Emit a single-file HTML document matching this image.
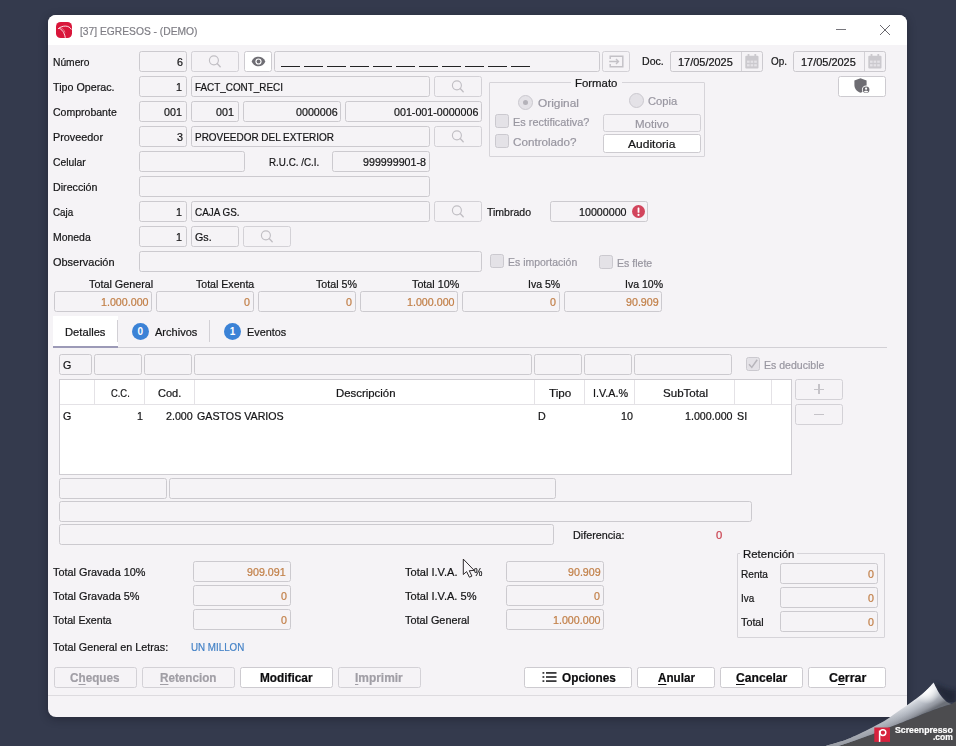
<!DOCTYPE html>
<html><head><meta charset="utf-8"><title>[37] EGRESOS - (DEMO)</title><style>
html,body{margin:0;padding:0}
body{width:956px;height:746px;overflow:hidden;background:#343a4d;position:relative;font-family:"Liberation Sans",sans-serif;}
.a,.t,.f,.b,.cb,.gb,.grid,.rd,.bd{position:absolute;box-sizing:border-box}
.t{white-space:nowrap;transform-origin:0 50%;-webkit-text-stroke:0.22px currentColor}
.win{position:absolute;left:48px;top:15px;width:859px;height:702px;background:#f5f3f6;border-radius:8px;overflow:hidden;box-shadow:0 2px 9px rgba(18,20,32,.42)}
.tb{position:absolute;left:0;top:0;width:100%;height:30px;background:#fff}
.f{border:1px solid #cccacf;border-radius:2.5px;background:#f5f3f6}
.b{border:1px solid #d3d1d6;border-radius:2.5px;background:#f5f3f6}
.w{background:#fff;border-color:#cdcbd0}
.cb{border:1px solid #cbc9cf;border-radius:2.5px;background:#e4e2e7}
.gb{border:1px solid #d6d4d9;border-radius:1px}
.grid{border:1px solid #cfcdd2;background:#fff}
.rd{width:15px;height:15px;border-radius:50%;border:1px solid #cbc9cf;background:#e4e2e7}
.rd i{position:absolute;left:4px;top:4px;width:5px;height:5px;border-radius:50%;background:#b4b2b9}
.bd{width:17.5px;height:17.5px;border-radius:50%;background:#3b82d6;color:#fff;font-size:10px;font-weight:bold;text-align:center;line-height:17.5px}
u{text-decoration:underline;text-underline-offset:1.5px}
</style></head>
<body>
<div class="win"><div class="tb"></div></div>
<svg class="a" style="left:56px;top:22px" width="16" height="16" viewBox="0 0 16 16"><rect width="16" height="16" rx="4.6" fill="#d9163a"/><path d="M2 6.9 C4.4 4.7 7 4.1 9.4 4.1 C12 4.1 14.2 5.3 15.4 7.5" fill="none" stroke="#fff" stroke-width="0.9" stroke-opacity="0.95"/><path d="M3.1 6.1 C5.6 7.4 8.4 10 9.3 15.8" fill="none" stroke="#fff" stroke-width="0.9" stroke-opacity="0.95"/><path d="M4.4 5.4 C6.6 6.4 8.2 8 9 10.6" fill="none" stroke="#fbd0d8" stroke-width="0.6" stroke-opacity="0.8"/></svg>
<div class="t" style="left:80.10px;top:22.60px;height:16px;line-height:16px;font-size:11.7px;color:#7f7e85;transform:scaleX(0.8781);">[37] EGRESOS - (DEMO)</div>
<div class="a" style="left:836px;top:29px;width:10px;height:1px;background:#77767c"></div>
<svg class="a" style="left:879px;top:24px" width="12" height="12" viewBox="0 0 12 12"><path d="M1 1 L11 11 M11 1 L1 11" stroke="#6a696f" stroke-width="1" fill="none"/></svg>
<div class="t" style="left:53.00px;top:54.00px;height:16px;line-height:16px;font-size:11.5px;color:#151517;transform:scaleX(0.8923);">Número</div>
<div class="t" style="left:53.00px;top:79.00px;height:16px;line-height:16px;font-size:11.5px;color:#151517;transform:scaleX(0.9312);">Tipo Operac.</div>
<div class="t" style="left:53.00px;top:104.00px;height:16px;line-height:16px;font-size:11.5px;color:#151517;transform:scaleX(0.9149);">Comprobante</div>
<div class="t" style="left:53.00px;top:129.00px;height:16px;line-height:16px;font-size:11.5px;color:#151517;transform:scaleX(0.9423);">Proveedor</div>
<div class="t" style="left:53.00px;top:154.00px;height:16px;line-height:16px;font-size:11.5px;color:#151517;transform:scaleX(0.8989);">Celular</div>
<div class="t" style="left:53.00px;top:179.00px;height:16px;line-height:16px;font-size:11.5px;color:#151517;transform:scaleX(0.9284);">Dirección</div>
<div class="t" style="left:53.00px;top:204.00px;height:16px;line-height:16px;font-size:11.5px;color:#151517;transform:scaleX(0.8556);">Caja</div>
<div class="t" style="left:53.00px;top:229.00px;height:16px;line-height:16px;font-size:11.5px;color:#151517;transform:scaleX(0.9081);">Moneda</div>
<div class="t" style="left:53.00px;top:254.00px;height:16px;line-height:16px;font-size:11.5px;color:#151517;transform:scaleX(0.9526);">Observación</div>
<div class="f" style="left:139px;top:51px;width:48px;height:21px;"></div>
<div class="t" style="left:177.25px;top:54.00px;height:16px;line-height:16px;font-size:10.8px;color:#151517;transform:scaleX(0.9900);">6</div>
<div class="b" style="left:191px;top:51px;width:48px;height:21px;"></div>
<svg class="a" style="left:205px;top:51.5px" width="20" height="20" viewBox="0 0 20 20"><circle cx="8.9" cy="8.3" r="4.5" fill="none" stroke="#c1bfc4" stroke-width="1.15"/><path d="M12.2 11.6 L15.2 14.7" stroke="#c1bfc4" stroke-width="1.4" stroke-linecap="round"/></svg>
<div class="b w" style="left:244px;top:51px;width:28px;height:21px;"></div>
<svg class="a" style="left:251px;top:56px" width="15" height="11" viewBox="0 0 15 11"><path d="M0.6 5.5 C2.2 2 4.8 0.7 7.5 0.7 C10.2 0.7 12.8 2 14.4 5.5 C12.8 9 10.2 10.3 7.5 10.3 C4.8 10.3 2.2 9 0.6 5.5 Z" fill="#6f6e74"/><circle cx="7.5" cy="5.5" r="3.1" fill="#fff"/><circle cx="7.5" cy="5.5" r="1.9" fill="#6f6e74"/></svg>
<div class="f" style="left:274px;top:51px;width:326px;height:21px;"></div>
<div class="a" style="left:281.25px;top:66.1px;width:18.8px;height:1.3px;background:#232325"></div>
<div class="a" style="left:304.25px;top:66.1px;width:18.8px;height:1.3px;background:#232325"></div>
<div class="a" style="left:327.25px;top:66.1px;width:18.8px;height:1.3px;background:#232325"></div>
<div class="a" style="left:350.25px;top:66.1px;width:18.8px;height:1.3px;background:#232325"></div>
<div class="a" style="left:373.25px;top:66.1px;width:18.8px;height:1.3px;background:#232325"></div>
<div class="a" style="left:396.25px;top:66.1px;width:18.8px;height:1.3px;background:#232325"></div>
<div class="a" style="left:419.25px;top:66.1px;width:18.8px;height:1.3px;background:#232325"></div>
<div class="a" style="left:442.25px;top:66.1px;width:18.8px;height:1.3px;background:#232325"></div>
<div class="a" style="left:465.25px;top:66.1px;width:18.8px;height:1.3px;background:#232325"></div>
<div class="a" style="left:488.25px;top:66.1px;width:18.8px;height:1.3px;background:#232325"></div>
<div class="a" style="left:511.25px;top:66.1px;width:18.8px;height:1.3px;background:#232325"></div>
<div class="b" style="left:602px;top:51px;width:28px;height:21px;"></div>
<svg class="a" style="left:608px;top:55px" width="16" height="13" viewBox="0 0 16 13"><path d="M2.2 4 V1.2 H14.8 V11.8 H2.2 V9" fill="none" stroke="#c3c1c6" stroke-width="1.45"/><path d="M1.2 6.5 H10.5 M8 4 L10.5 6.5 L8 9" fill="none" stroke="#c3c1c6" stroke-width="1.35"/></svg>
<div class="t" style="left:642.00px;top:52.70px;height:16px;line-height:16px;font-size:11.5px;color:#151517;transform:scaleX(0.9199);">Doc.</div>
<div class="f" style="left:670px;top:51px;width:93px;height:21px;"></div>
<div class="a" style="left:741px;top:52px;width:1px;height:19px;background:#d3d1d6"></div>
<div class="t" style="left:677.60px;top:54.00px;height:16px;line-height:16px;font-size:10.8px;color:#151517;transform:scaleX(1.0138);">17/05/2025</div>
<svg class="a" style="left:745px;top:54px" width="14" height="15" viewBox="0 0 14 15"><rect x="0.3" y="1.8" width="13.2" height="12.8" rx="1" fill="#cbc9ce"/><rect x="2.6" y="0" width="1.8" height="3" fill="#cbc9ce"/><rect x="9.4" y="0" width="1.8" height="3" fill="#cbc9ce"/><g fill="#e4e2e6"><rect x="2" y="6.6" width="2.6" height="2.2"/><rect x="5.6" y="6.6" width="2.6" height="2.2"/><rect x="9.2" y="6.6" width="2.6" height="2.2"/><rect x="2" y="10.2" width="2.6" height="2.2"/><rect x="5.6" y="10.2" width="2.6" height="2.2"/><rect x="9.2" y="10.2" width="2.6" height="2.2"/></g></svg>
<div class="t" style="left:771.25px;top:52.70px;height:16px;line-height:16px;font-size:11.5px;color:#151517;transform:scaleX(0.8631);">Op.</div>
<div class="f" style="left:793px;top:51px;width:93px;height:21px;"></div>
<div class="a" style="left:864px;top:52px;width:1px;height:19px;background:#d3d1d6"></div>
<div class="t" style="left:800.70px;top:54.00px;height:16px;line-height:16px;font-size:10.8px;color:#151517;transform:scaleX(1.0138);">17/05/2025</div>
<svg class="a" style="left:868px;top:54px" width="14" height="15" viewBox="0 0 14 15"><rect x="0.3" y="1.8" width="13.2" height="12.8" rx="1" fill="#cbc9ce"/><rect x="2.6" y="0" width="1.8" height="3" fill="#cbc9ce"/><rect x="9.4" y="0" width="1.8" height="3" fill="#cbc9ce"/><g fill="#e4e2e6"><rect x="2" y="6.6" width="2.6" height="2.2"/><rect x="5.6" y="6.6" width="2.6" height="2.2"/><rect x="9.2" y="6.6" width="2.6" height="2.2"/><rect x="2" y="10.2" width="2.6" height="2.2"/><rect x="5.6" y="10.2" width="2.6" height="2.2"/><rect x="9.2" y="10.2" width="2.6" height="2.2"/></g></svg>
<div class="f" style="left:139px;top:76px;width:48px;height:21px;"></div>
<div class="t" style="left:175.85px;top:79.00px;height:16px;line-height:16px;font-size:10.8px;color:#151517;transform:scaleX(0.9900);">1</div>
<div class="f" style="left:191px;top:76px;width:239px;height:21px;"></div>
<div class="t" style="left:194.50px;top:79.00px;height:16px;line-height:16px;font-size:10.8px;color:#151517;transform:scaleX(0.9155);">FACT_CONT_RECI</div>
<div class="b" style="left:434px;top:76px;width:48px;height:21px;"></div>
<svg class="a" style="left:448px;top:76.5px" width="20" height="20" viewBox="0 0 20 20"><circle cx="8.9" cy="8.3" r="4.5" fill="none" stroke="#c1bfc4" stroke-width="1.15"/><path d="M12.2 11.6 L15.2 14.7" stroke="#c1bfc4" stroke-width="1.4" stroke-linecap="round"/></svg>
<div class="b w" style="left:838px;top:76px;width:48px;height:21px;"></div>
<svg class="a" style="left:854px;top:78px" width="17" height="16" viewBox="0 0 17 16"><path d="M6.5 0.3 L12.6 2.6 V7 C12.6 10.6 10.2 13.6 6.5 14.8 C2.8 13.6 0.4 10.6 0.4 7 V2.6 Z" fill="#6d6c72"/><circle cx="12.1" cy="11.8" r="4.2" fill="#fff"/><circle cx="12.1" cy="11.8" r="3.3" fill="#6d6c72"/><circle cx="12.1" cy="10.7" r="1.1" fill="#fff"/><path d="M9.9 13.6 C10.5 12.4 13.7 12.4 14.3 13.6 C13.4 14.8 10.8 14.8 9.9 13.6Z" fill="#fff"/></svg>
<div class="f" style="left:139px;top:101px;width:48px;height:21px;"></div>
<div class="t" style="left:163.96px;top:104.00px;height:16px;line-height:16px;font-size:10.8px;color:#151517;transform:scaleX(0.9900);">001</div>
<div class="f" style="left:191px;top:101px;width:48px;height:21px;"></div>
<div class="t" style="left:215.96px;top:104.00px;height:16px;line-height:16px;font-size:10.8px;color:#151517;transform:scaleX(0.9900);">001</div>
<div class="f" style="left:243px;top:101px;width:98px;height:21px;"></div>
<div class="t" style="left:295.58px;top:104.00px;height:16px;line-height:16px;font-size:10.8px;color:#151517;transform:scaleX(0.9900);">0000006</div>
<div class="f" style="left:345px;top:101px;width:137px;height:21px;"></div>
<div class="t" style="left:393.78px;top:104.00px;height:16px;line-height:16px;font-size:10.8px;color:#151517;transform:scaleX(0.9900);">001-001-0000006</div>
<div class="f" style="left:139px;top:126px;width:48px;height:21px;"></div>
<div class="t" style="left:177.25px;top:129.00px;height:16px;line-height:16px;font-size:10.8px;color:#151517;transform:scaleX(0.9900);">3</div>
<div class="f" style="left:191px;top:126px;width:239px;height:21px;"></div>
<div class="t" style="left:194.50px;top:129.00px;height:16px;line-height:16px;font-size:10.8px;color:#151517;transform:scaleX(0.9216);">PROVEEDOR DEL EXTERIOR</div>
<div class="b" style="left:434px;top:126px;width:48px;height:21px;"></div>
<svg class="a" style="left:448px;top:126.5px" width="20" height="20" viewBox="0 0 20 20"><circle cx="8.9" cy="8.3" r="4.5" fill="none" stroke="#c1bfc4" stroke-width="1.15"/><path d="M12.2 11.6 L15.2 14.7" stroke="#c1bfc4" stroke-width="1.4" stroke-linecap="round"/></svg>
<div class="f" style="left:139px;top:151px;width:106px;height:21px;"></div>
<div class="t" style="left:269.25px;top:154.00px;height:16px;line-height:16px;font-size:11.5px;color:#151517;transform:scaleX(0.8549);">R.U.C. /C.I.</div>
<div class="f" style="left:332px;top:151px;width:98px;height:21px;"></div>
<div class="t" style="left:363.18px;top:154.00px;height:16px;line-height:16px;font-size:10.8px;color:#151517;transform:scaleX(0.9900);">999999901-8</div>
<div class="f" style="left:139px;top:176px;width:291px;height:21px;"></div>
<div class="f" style="left:139px;top:201px;width:48px;height:21px;"></div>
<div class="t" style="left:175.85px;top:204.00px;height:16px;line-height:16px;font-size:10.8px;color:#151517;transform:scaleX(0.9900);">1</div>
<div class="f" style="left:191px;top:201px;width:239px;height:21px;"></div>
<div class="t" style="left:194.50px;top:204.00px;height:16px;line-height:16px;font-size:10.8px;color:#151517;transform:scaleX(0.9154);">CAJA GS.</div>
<div class="b" style="left:434px;top:201px;width:48px;height:21px;"></div>
<svg class="a" style="left:448px;top:201.5px" width="20" height="20" viewBox="0 0 20 20"><circle cx="8.9" cy="8.3" r="4.5" fill="none" stroke="#c1bfc4" stroke-width="1.15"/><path d="M12.2 11.6 L15.2 14.7" stroke="#c1bfc4" stroke-width="1.4" stroke-linecap="round"/></svg>
<div class="t" style="left:487.00px;top:204.00px;height:16px;line-height:16px;font-size:11.5px;color:#151517;transform:scaleX(0.9138);">Timbrado</div>
<div class="f" style="left:550px;top:201px;width:98px;height:21px;"></div>
<div class="t" style="left:579.03px;top:204.00px;height:16px;line-height:16px;font-size:10.8px;color:#151517;transform:scaleX(0.9900);">10000000</div>
<svg class="a" style="left:632px;top:205px" width="13" height="13" viewBox="0 0 13 13"><circle cx="6.5" cy="6.5" r="6.5" fill="#d2445c"/><rect x="5.6" y="2.4" width="1.8" height="5.4" rx="0.6" fill="#fff"/><circle cx="6.5" cy="9.9" r="1.05" fill="#fff"/></svg>
<div class="f" style="left:139px;top:226px;width:48px;height:21px;"></div>
<div class="t" style="left:175.85px;top:229.00px;height:16px;line-height:16px;font-size:10.8px;color:#151517;transform:scaleX(0.9900);">1</div>
<div class="f" style="left:191px;top:226px;width:48px;height:21px;"></div>
<div class="t" style="left:194.50px;top:229.00px;height:16px;line-height:16px;font-size:10.8px;color:#151517;transform:scaleX(0.9900);">Gs.</div>
<div class="b" style="left:243px;top:226px;width:48px;height:21px;"></div>
<svg class="a" style="left:257px;top:226.5px" width="20" height="20" viewBox="0 0 20 20"><circle cx="8.9" cy="8.3" r="4.5" fill="none" stroke="#c1bfc4" stroke-width="1.15"/><path d="M12.2 11.6 L15.2 14.7" stroke="#c1bfc4" stroke-width="1.4" stroke-linecap="round"/></svg>
<div class="f" style="left:139px;top:251px;width:343px;height:21px;"></div>
<div class="cb" style="left:490px;top:254px;width:14px;height:14px;"></div>
<div class="t" style="left:508.25px;top:254.00px;height:16px;line-height:16px;font-size:11.5px;color:#9896a0;transform:scaleX(0.9105);">Es importación</div>
<div class="cb" style="left:599px;top:255px;width:14px;height:14px;"></div>
<div class="t" style="left:617.25px;top:254.80px;height:16px;line-height:16px;font-size:11.5px;color:#9896a0;transform:scaleX(0.9191);">Es flete</div>
<div class="gb" style="left:489px;top:82px;width:216px;height:75px;"></div>
<div class="a" style="left:571px;top:78px;width:51px;height:10px;background:#f5f3f6"></div>
<div class="t" style="left:575.30px;top:75.30px;height:16px;line-height:16px;font-size:11.7px;color:#151517;transform:scaleX(0.9745);">Formato</div>
<div class="rd" style="left:518px;top:95px"><i></i></div>
<div class="t" style="left:537.70px;top:94.80px;height:16px;line-height:16px;font-size:11.7px;color:#9896a0;transform:scaleX(1.0169);">Original</div>
<div class="rd" style="left:629px;top:92.7px"></div>
<div class="t" style="left:648.25px;top:92.80px;height:16px;line-height:16px;font-size:11.7px;color:#9896a0;transform:scaleX(0.9564);">Copia</div>
<div class="cb" style="left:495px;top:114px;width:14px;height:14px;"></div>
<div class="t" style="left:513.40px;top:113.70px;height:16px;line-height:16px;font-size:11.7px;color:#9896a0;transform:scaleX(0.9338);">Es rectificativa?</div>
<div class="cb" style="left:495px;top:134px;width:14px;height:14px;"></div>
<div class="t" style="left:513.40px;top:133.70px;height:16px;line-height:16px;font-size:11.7px;color:#9896a0;transform:scaleX(0.9978);">Controlado?</div>
<div class="b" style="left:603px;top:114px;width:98px;height:18px;"></div>
<div class="t" style="left:634.50px;top:115.80px;height:16px;line-height:16px;font-size:11.7px;color:#9896a0;transform:scaleX(0.9868);">Motivo</div>
<div class="b w" style="left:603px;top:134px;width:98px;height:19px;"></div>
<div class="t" style="left:628.00px;top:136.00px;height:16px;line-height:16px;font-size:11.7px;color:#151517;transform:scaleX(1.0283);">Auditoria</div>
<div class="t" style="left:89.00px;top:276.30px;height:16px;line-height:16px;font-size:11.5px;color:#151517;transform:scaleX(0.9393);">Total General</div>
<div class="t" style="left:196.25px;top:276.30px;height:16px;line-height:16px;font-size:11.5px;color:#151517;transform:scaleX(0.9203);">Total Exenta</div>
<div class="t" style="left:315.50px;top:276.30px;height:16px;line-height:16px;font-size:11.5px;color:#151517;transform:scaleX(0.9297);">Total 5%</div>
<div class="t" style="left:411.50px;top:276.30px;height:16px;line-height:16px;font-size:11.5px;color:#151517;transform:scaleX(0.9355);">Total 10%</div>
<div class="t" style="left:528.25px;top:276.30px;height:16px;line-height:16px;font-size:11.5px;color:#151517;transform:scaleX(0.9174);">Iva 5%</div>
<div class="t" style="left:624.50px;top:276.30px;height:16px;line-height:16px;font-size:11.5px;color:#151517;transform:scaleX(0.9146);">Iva 10%</div>
<div class="f" style="left:54px;top:291px;width:98px;height:21px;"></div>
<div class="t" style="left:100.63px;top:293.80px;height:16px;line-height:16px;font-size:10.8px;color:#c17f47;transform:scaleX(0.9900);">1.000.000</div>
<div class="f" style="left:156px;top:291px;width:98px;height:21px;"></div>
<div class="t" style="left:244.25px;top:293.80px;height:16px;line-height:16px;font-size:10.8px;color:#c17f47;transform:scaleX(0.9900);">0</div>
<div class="f" style="left:258px;top:291px;width:98px;height:21px;"></div>
<div class="t" style="left:346.25px;top:293.80px;height:16px;line-height:16px;font-size:10.8px;color:#c17f47;transform:scaleX(0.9900);">0</div>
<div class="f" style="left:360px;top:291px;width:98px;height:21px;"></div>
<div class="t" style="left:406.63px;top:293.80px;height:16px;line-height:16px;font-size:10.8px;color:#c17f47;transform:scaleX(0.9900);">1.000.000</div>
<div class="f" style="left:462px;top:291px;width:98px;height:21px;"></div>
<div class="t" style="left:550.25px;top:293.80px;height:16px;line-height:16px;font-size:10.8px;color:#c17f47;transform:scaleX(0.9900);">0</div>
<div class="f" style="left:564px;top:291px;width:98px;height:21px;"></div>
<div class="t" style="left:625.50px;top:293.80px;height:16px;line-height:16px;font-size:10.8px;color:#c17f47;transform:scaleX(0.9900);">90.909</div>
<div class="a" style="left:53px;top:347px;width:834px;height:1px;background:#d2d0d5"></div>
<div class="a" style="left:53px;top:316px;width:64.5px;height:30px;background:#fff"></div>
<div class="a" style="left:53px;top:345.5px;width:64.5px;height:2px;background:#9c9ab7"></div>
<div class="a" style="left:117px;top:320px;width:1px;height:22px;background:#d2d0d5"></div>
<div class="a" style="left:209px;top:320px;width:1px;height:22px;background:#d2d0d5"></div>
<div class="t" style="left:65.20px;top:323.60px;height:16px;line-height:16px;font-size:11.7px;color:#151517;transform:scaleX(0.9581);">Detalles</div>
<div class="bd" style="left:131.6px;top:322.7px">0</div>
<div class="t" style="left:155.10px;top:323.60px;height:16px;line-height:16px;font-size:11.7px;color:#151517;transform:scaleX(0.9450);">Archivos</div>
<div class="bd" style="left:223.8px;top:322.7px">1</div>
<div class="t" style="left:247.00px;top:323.60px;height:16px;line-height:16px;font-size:11.7px;color:#151517;transform:scaleX(0.9285);">Eventos</div>
<div class="f" style="left:59px;top:354px;width:33px;height:21px;"></div>
<div class="f" style="left:94px;top:354px;width:48px;height:21px;"></div>
<div class="f" style="left:144px;top:354px;width:48px;height:21px;"></div>
<div class="f" style="left:194px;top:354px;width:338px;height:21px;"></div>
<div class="f" style="left:534px;top:354px;width:48px;height:21px;"></div>
<div class="f" style="left:584px;top:354px;width:48px;height:21px;"></div>
<div class="f" style="left:634px;top:354px;width:98px;height:21px;"></div>
<div class="t" style="left:62.70px;top:356.80px;height:16px;line-height:16px;font-size:10.8px;color:#151517;transform:scaleX(0.9900);">G</div>
<div class="cb" style="left:746px;top:357px;width:14px;height:14px;"></div>
<svg class="a" style="left:747px;top:358px" width="12" height="12" viewBox="0 0 12 12"><path d="M2 6.2 L4.8 9.4 L10.2 1.8" fill="none" stroke="#b7b5bb" stroke-width="1.5"/></svg>
<div class="t" style="left:764.30px;top:357.20px;height:16px;line-height:16px;font-size:11.5px;color:#9896a0;transform:scaleX(0.9173);">Es deducible</div>
<div class="grid" style="left:59px;top:379px;width:733px;height:96px;"></div>
<div class="a" style="left:60px;top:404px;width:731px;height:1px;background:#e4e2e6"></div>
<div class="a" style="left:94px;top:380px;width:1px;height:24px;background:#e4e2e6"></div>
<div class="a" style="left:144px;top:380px;width:1px;height:24px;background:#e4e2e6"></div>
<div class="a" style="left:194px;top:380px;width:1px;height:24px;background:#e4e2e6"></div>
<div class="a" style="left:534px;top:380px;width:1px;height:24px;background:#e4e2e6"></div>
<div class="a" style="left:584px;top:380px;width:1px;height:24px;background:#e4e2e6"></div>
<div class="a" style="left:634px;top:380px;width:1px;height:24px;background:#e4e2e6"></div>
<div class="a" style="left:734px;top:380px;width:1px;height:24px;background:#e4e2e6"></div>
<div class="a" style="left:771px;top:380px;width:1px;height:24px;background:#e4e2e6"></div>
<div class="t" style="left:110.75px;top:384.80px;height:16px;line-height:16px;font-size:11.5px;color:#151517;transform:scaleX(0.8152);">C.C.</div>
<div class="t" style="left:158.25px;top:384.80px;height:16px;line-height:16px;font-size:11.5px;color:#151517;transform:scaleX(0.9573);">Cod.</div>
<div class="t" style="left:335.50px;top:384.80px;height:16px;line-height:16px;font-size:11.5px;color:#151517;transform:scaleX(0.9904);">Descripción</div>
<div class="t" style="left:549.25px;top:384.80px;height:16px;line-height:16px;font-size:11.5px;color:#151517;transform:scaleX(1.0140);">Tipo</div>
<div class="t" style="left:593.00px;top:384.80px;height:16px;line-height:16px;font-size:11.5px;color:#151517;transform:scaleX(0.9385);">I.V.A.%</div>
<div class="t" style="left:662.50px;top:384.80px;height:16px;line-height:16px;font-size:11.5px;color:#151517;transform:scaleX(1.0054);">SubTotal</div>
<div class="t" style="left:62.50px;top:408.20px;height:16px;line-height:16px;font-size:10.8px;color:#151517;transform:scaleX(0.9900);">G</div>
<div class="t" style="left:136.56px;top:408.20px;height:16px;line-height:16px;font-size:10.8px;color:#151517;transform:scaleX(0.9900);">1</div>
<div class="t" style="left:165.75px;top:408.20px;height:16px;line-height:16px;font-size:10.8px;color:#151517;transform:scaleX(0.9900);">2.000</div>
<div class="t" style="left:197.00px;top:408.20px;height:16px;line-height:16px;font-size:10.8px;color:#151517;transform:scaleX(0.9878);">GASTOS VARIOS</div>
<div class="t" style="left:537.50px;top:408.20px;height:16px;line-height:16px;font-size:10.8px;color:#151517;transform:scaleX(0.9900);">D</div>
<div class="t" style="left:620.61px;top:408.20px;height:16px;line-height:16px;font-size:10.8px;color:#151517;transform:scaleX(0.9900);">10</div>
<div class="t" style="left:684.53px;top:408.20px;height:16px;line-height:16px;font-size:10.8px;color:#151517;transform:scaleX(0.9900);">1.000.000</div>
<div class="t" style="left:736.90px;top:408.20px;height:16px;line-height:16px;font-size:10.8px;color:#151517;transform:scaleX(0.9900);">SI</div>
<div class="b" style="left:795px;top:379px;width:48px;height:21px;"></div>
<div class="b" style="left:795px;top:404px;width:48px;height:21px;"></div>
<div class="a" style="left:814px;top:388.6px;width:10px;height:1.2px;background:#c5c3c8"></div><div class="a" style="left:818.4px;top:384px;width:1.2px;height:10px;background:#c5c3c8"></div>
<div class="a" style="left:814px;top:413.6px;width:10px;height:1.3px;background:#c5c3c8"></div>
<div class="f" style="left:59px;top:478px;width:108px;height:21px;"></div>
<div class="f" style="left:169px;top:478px;width:387px;height:21px;"></div>
<div class="f" style="left:59px;top:501px;width:693px;height:21px;"></div>
<div class="f" style="left:59px;top:524px;width:495px;height:21px;"></div>
<div class="t" style="left:573.00px;top:527.20px;height:16px;line-height:16px;font-size:11.5px;color:#151517;transform:scaleX(0.9369);">Diferencia:</div>
<div class="t" style="left:716.25px;top:526.60px;height:16px;line-height:16px;font-size:11.5px;color:#c9414f;transform:scaleX(0.9775);">0</div>
<div class="t" style="left:53.00px;top:564.00px;height:16px;line-height:16px;font-size:11.5px;color:#151517;transform:scaleX(0.9457);">Total Gravada 10%</div>
<div class="t" style="left:53.00px;top:588.00px;height:16px;line-height:16px;font-size:11.5px;color:#151517;transform:scaleX(0.9462);">Total Gravada 5%</div>
<div class="t" style="left:53.00px;top:612.00px;height:16px;line-height:16px;font-size:11.5px;color:#151517;transform:scaleX(0.9242);">Total Exenta</div>
<div class="f" style="left:193px;top:561px;width:98px;height:21px;"></div>
<div class="t" style="left:247.15px;top:563.80px;height:16px;line-height:16px;font-size:10.8px;color:#c17f47;transform:scaleX(0.9900);">909.091</div>
<div class="f" style="left:193px;top:585px;width:98px;height:21px;"></div>
<div class="t" style="left:281.25px;top:587.80px;height:16px;line-height:16px;font-size:10.8px;color:#c17f47;transform:scaleX(0.9900);">0</div>
<div class="f" style="left:193px;top:609px;width:98px;height:21px;"></div>
<div class="t" style="left:281.25px;top:611.80px;height:16px;line-height:16px;font-size:10.8px;color:#c17f47;transform:scaleX(0.9900);">0</div>
<div class="t" style="left:405.00px;top:564.00px;height:16px;line-height:16px;font-size:11.5px;color:#151517;transform:scaleX(0.9623);">Total I.V.A.</div>
<div class="t" style="left:405.00px;top:588.00px;height:16px;line-height:16px;font-size:11.5px;color:#151517;transform:scaleX(0.9614);">Total I.V.A. 5%</div>
<div class="t" style="left:405.00px;top:612.00px;height:16px;line-height:16px;font-size:11.5px;color:#151517;transform:scaleX(0.9430);">Total General</div>
<div class="t" style="left:473.80px;top:564.00px;height:16px;line-height:16px;font-size:11.5px;color:#151517;transform:scaleX(0.8216);">%</div>
<div class="f" style="left:506px;top:561px;width:98px;height:21px;"></div>
<div class="t" style="left:567.50px;top:563.80px;height:16px;line-height:16px;font-size:10.8px;color:#c17f47;transform:scaleX(0.9900);">90.909</div>
<div class="f" style="left:506px;top:585px;width:98px;height:21px;"></div>
<div class="t" style="left:594.25px;top:587.80px;height:16px;line-height:16px;font-size:10.8px;color:#c17f47;transform:scaleX(0.9900);">0</div>
<div class="f" style="left:506px;top:609px;width:98px;height:21px;"></div>
<div class="t" style="left:552.63px;top:611.80px;height:16px;line-height:16px;font-size:10.8px;color:#c17f47;transform:scaleX(0.9900);">1.000.000</div>
<div class="t" style="left:53.00px;top:639.20px;height:16px;line-height:16px;font-size:11.5px;color:#151517;transform:scaleX(0.9390);">Total General en Letras:</div>
<div class="t" style="left:190.50px;top:639.20px;height:16px;line-height:16px;font-size:11.5px;color:#4482c6;transform:scaleX(0.8504);">UN MILLON</div>
<div class="gb" style="left:737px;top:553px;width:148px;height:85px;"></div>
<div class="a" style="left:740px;top:549px;width:57px;height:10px;background:#f5f3f6"></div>
<div class="t" style="left:743.00px;top:546.30px;height:16px;line-height:16px;font-size:11.7px;color:#151517;transform:scaleX(0.9775);">Retención</div>
<div class="t" style="left:741.25px;top:566.20px;height:16px;line-height:16px;font-size:11.5px;color:#151517;transform:scaleX(0.8797);">Renta</div>
<div class="f" style="left:780px;top:563px;width:98px;height:21px;"></div>
<div class="t" style="left:868.25px;top:565.80px;height:16px;line-height:16px;font-size:10.8px;color:#c17f47;transform:scaleX(0.9900);">0</div>
<div class="t" style="left:741.25px;top:590.20px;height:16px;line-height:16px;font-size:11.5px;color:#151517;transform:scaleX(0.8631);">Iva</div>
<div class="f" style="left:780px;top:587px;width:98px;height:21px;"></div>
<div class="t" style="left:868.25px;top:589.80px;height:16px;line-height:16px;font-size:10.8px;color:#c17f47;transform:scaleX(0.9900);">0</div>
<div class="t" style="left:741.25px;top:614.20px;height:16px;line-height:16px;font-size:11.5px;color:#151517;transform:scaleX(0.9367);">Total</div>
<div class="f" style="left:780px;top:611px;width:98px;height:21px;"></div>
<div class="t" style="left:868.25px;top:613.80px;height:16px;line-height:16px;font-size:10.8px;color:#c17f47;transform:scaleX(0.9900);">0</div>
<div class="b" style="left:54px;top:667px;width:83px;height:21px;"></div>
<div class="t" style="left:70.00px;top:670.30px;height:16px;line-height:16px;font-size:12.5px;color:#a09ea5;transform:scaleX(0.9377);font-weight:bold;">C<u>h</u>eques</div>
<div class="b" style="left:142px;top:667px;width:93px;height:21px;"></div>
<div class="t" style="left:160.00px;top:670.30px;height:16px;line-height:16px;font-size:12.5px;color:#a09ea5;transform:scaleX(0.9350);font-weight:bold;"><u>R</u>etencion</div>
<div class="b w" style="left:240px;top:667px;width:93px;height:21px;"></div>
<div class="t" style="left:260.00px;top:670.30px;height:16px;line-height:16px;font-size:12.5px;color:#0c0c0e;transform:scaleX(0.9449);font-weight:bold;">Modificar</div>
<div class="b" style="left:338px;top:667px;width:83px;height:21px;"></div>
<div class="t" style="left:355.25px;top:670.30px;height:16px;line-height:16px;font-size:12.5px;color:#a09ea5;transform:scaleX(0.9548);font-weight:bold;"><u>I</u>mprimir</div>
<div class="b w" style="left:524px;top:667px;width:108px;height:21px;"></div>
<div class="t" style="left:562.00px;top:670.30px;height:16px;line-height:16px;font-size:12.5px;color:#0c0c0e;transform:scaleX(0.9436);font-weight:bold;">Opciones</div>
<div class="b w" style="left:637px;top:667px;width:78px;height:21px;"></div>
<div class="t" style="left:658.00px;top:670.30px;height:16px;line-height:16px;font-size:12.5px;color:#0c0c0e;transform:scaleX(0.9346);font-weight:bold;"><u>A</u>nular</div>
<div class="b w" style="left:720px;top:667px;width:83px;height:21px;"></div>
<div class="t" style="left:735.75px;top:670.30px;height:16px;line-height:16px;font-size:12.5px;color:#0c0c0e;transform:scaleX(0.9704);font-weight:bold;"><u>C</u>ancelar</div>
<div class="b w" style="left:808px;top:667px;width:78px;height:21px;"></div>
<div class="t" style="left:828.75px;top:670.30px;height:16px;line-height:16px;font-size:12.5px;color:#0c0c0e;transform:scaleX(0.9927);font-weight:bold;">C<u>e</u>rrar</div>
<svg class="a" style="left:542px;top:671px" width="15" height="12" viewBox="0 0 15 12"><g fill="#3a3a3c"><rect x="0.5" y="1" width="1.8" height="1.8"/><rect x="4" y="1" width="10.5" height="1.8"/><rect x="0.5" y="5.1" width="1.8" height="1.8"/><rect x="4" y="5.1" width="10.5" height="1.8"/><rect x="0.5" y="9.2" width="1.8" height="1.8"/><rect x="4" y="9.2" width="10.5" height="1.8"/></g></svg>
<div class="a" style="left:48px;top:694.5px;width:859px;height:1px;background:#dddbdf"></div>
<svg class="a" style="left:462px;top:558px" width="14" height="21" viewBox="0 0 14 21"><path d="M1.3 1.1 V16.5 L4.6 13.6 L7.4 19.2 L9.9 18.1 L7.3 12.7 L12.2 12.4 Z" fill="#f8f6f9" stroke="#1a1416" stroke-width="0.9" stroke-linejoin="round"/></svg>
<svg class="a" style="left:806px;top:666px" width="150" height="80" viewBox="806 666 150 80">
<defs>
<linearGradient id="cg" gradientUnits="userSpaceOnUse" x1="917.8" y1="697.6" x2="926.2" y2="712.7"><stop offset="0" stop-color="#e6e8ed"/><stop offset="0.2" stop-color="#cdd1d8"/><stop offset="0.5" stop-color="#b3b8c1"/><stop offset="0.8" stop-color="#92969f"/><stop offset="1" stop-color="#6c7078"/></linearGradient>
<linearGradient id="cg2" gradientUnits="userSpaceOnUse" x1="905" y1="708" x2="830" y2="746"><stop offset="0" stop-color="#7e828b" stop-opacity="0"/><stop offset="1" stop-color="#7e828b" stop-opacity="0.75"/></linearGradient>
<radialGradient id="cg3" gradientUnits="userSpaceOnUse" cx="927" cy="691" r="13"><stop offset="0" stop-color="#fff" stop-opacity="0.95"/><stop offset="0.5" stop-color="#fff" stop-opacity="0.55"/><stop offset="1" stop-color="#fff" stop-opacity="0"/></radialGradient>
<filter id="bl" x="-50%" y="-50%" width="200%" height="200%"><feGaussianBlur stdDeviation="2.2"/></filter>
<clipPath id="cpn"><rect x="806" y="666" width="150" height="36"/></clipPath>
</defs>
<g clip-path="url(#cpn)"><path d="M933.6 682.4 C934.0 683.3 935.2 685.9 936.3 688.0 C937.4 690.1 938.7 692.9 940.4 695.1 C942.1 697.3 944.4 699.9 946.3 701.4 C948.2 702.9 950.8 703.5 951.7 703.9 L956 701.2 L956 690 C948 690 940 686 933.6 682.4 Z" fill="#1f2331" opacity="0.75" filter="url(#bl)"/></g>
<path d="M956 701.2 L951.7 703.9 C949.7 704.5 943.9 706.2 939.6 707.7 C935.4 709.2 931.2 710.8 926.2 712.7 C921.2 714.7 914.4 717.5 909.5 719.4 C904.6 721.3 900.8 722.9 896.9 724.4 C893.0 725.9 889.9 727.0 886.0 728.6 C882.1 730.2 879.9 731.4 873.6 733.8 C867.4 736.2 854.8 740.7 848.5 742.8 C842.2 744.9 838.1 745.9 836.0 746.5 L956 747 Z" fill="#4c4c4f"/>
<path d="M933.6 682.4 C934.0 683.3 935.2 685.9 936.3 688.0 C937.4 690.1 938.7 692.9 940.4 695.1 C942.1 697.3 944.4 699.9 946.3 701.4 C948.2 702.9 950.8 703.5 951.7 703.9 C949.7 704.5 943.9 706.2 939.6 707.7 C935.4 709.2 931.2 710.8 926.2 712.7 C921.2 714.7 914.4 717.5 909.5 719.4 C904.6 721.3 900.8 722.9 896.9 724.4 C893.0 725.9 889.9 727.0 886.0 728.6 C882.1 730.2 879.9 731.4 873.6 733.8 C867.4 736.2 854.8 740.7 848.5 742.8 C842.2 744.9 838.1 745.9 836.0 746.5 L824 746.5 C826.0 745.9 831.9 744.3 836.0 743.0 C840.1 741.7 843.3 741.0 848.5 738.8 C853.7 736.6 862.8 732.2 867.4 730.0 C872.0 727.8 873.2 727.1 876.0 725.6 C878.8 724.1 881.6 722.7 884.4 721.0 C887.2 719.3 889.9 717.2 892.7 715.2 C895.5 713.2 898.3 711.2 901.1 709.3 C903.9 707.3 906.7 705.5 909.5 703.5 C912.3 701.5 915.0 699.8 917.8 697.6 C920.6 695.4 923.6 693.0 926.2 690.5 C928.8 688.0 932.4 683.8 933.6 682.4 Z" fill="url(#cg)"/>
<path d="M933.6 682.4 C934.0 683.3 935.2 685.9 936.3 688.0 C937.4 690.1 938.7 692.9 940.4 695.1 C942.1 697.3 944.4 699.9 946.3 701.4 C948.2 702.9 950.8 703.5 951.7 703.9 C949.7 704.5 943.9 706.2 939.6 707.7 C935.4 709.2 931.2 710.8 926.2 712.7 C921.2 714.7 914.4 717.5 909.5 719.4 C904.6 721.3 900.8 722.9 896.9 724.4 C893.0 725.9 889.9 727.0 886.0 728.6 C882.1 730.2 879.9 731.4 873.6 733.8 C867.4 736.2 854.8 740.7 848.5 742.8 C842.2 744.9 838.1 745.9 836.0 746.5 L824 746.5 C826.0 745.9 831.9 744.3 836.0 743.0 C840.1 741.7 843.3 741.0 848.5 738.8 C853.7 736.6 862.8 732.2 867.4 730.0 C872.0 727.8 873.2 727.1 876.0 725.6 C878.8 724.1 881.6 722.7 884.4 721.0 C887.2 719.3 889.9 717.2 892.7 715.2 C895.5 713.2 898.3 711.2 901.1 709.3 C903.9 707.3 906.7 705.5 909.5 703.5 C912.3 701.5 915.0 699.8 917.8 697.6 C920.6 695.4 923.6 693.0 926.2 690.5 C928.8 688.0 932.4 683.8 933.6 682.4 Z" fill="url(#cg2)"/>
<path d="M933.6 682.4 C934.0 683.3 935.2 685.9 936.3 688.0 C937.4 690.1 938.7 692.9 940.4 695.1 C942.1 697.3 944.4 699.9 946.3 701.4 C948.2 702.9 950.8 703.5 951.7 703.9 C949.7 704.5 943.9 706.2 939.6 707.7 C935.4 709.2 931.2 710.8 926.2 712.7 C921.2 714.7 914.4 717.5 909.5 719.4 C904.6 721.3 900.8 722.9 896.9 724.4 C893.0 725.9 889.9 727.0 886.0 728.6 C882.1 730.2 879.9 731.4 873.6 733.8 C867.4 736.2 854.8 740.7 848.5 742.8 C842.2 744.9 838.1 745.9 836.0 746.5 L824 746.5 C826.0 745.9 831.9 744.3 836.0 743.0 C840.1 741.7 843.3 741.0 848.5 738.8 C853.7 736.6 862.8 732.2 867.4 730.0 C872.0 727.8 873.2 727.1 876.0 725.6 C878.8 724.1 881.6 722.7 884.4 721.0 C887.2 719.3 889.9 717.2 892.7 715.2 C895.5 713.2 898.3 711.2 901.1 709.3 C903.9 707.3 906.7 705.5 909.5 703.5 C912.3 701.5 915.0 699.8 917.8 697.6 C920.6 695.4 923.6 693.0 926.2 690.5 C928.8 688.0 932.4 683.8 933.6 682.4 Z" fill="url(#cg3)"/>
<rect x="874.3" y="727.5" width="15.7" height="14.4" fill="#d7223d"/>
<circle cx="882.9" cy="732.6" r="2.9" fill="none" stroke="#fff" stroke-width="1.5"/>
<path d="M879.6 730.6 V741.9" stroke="#fff" stroke-width="1.5"/>
</svg>
<div class="t" style="left:894.90px;top:721.90px;height:16px;line-height:16px;font-size:9.3px;color:#fff;transform:scaleX(0.9395);font-weight:bold;">Screenpresso</div>
<div class="t" style="left:932.80px;top:728.70px;height:16px;line-height:16px;font-size:9.3px;color:#fff;transform:scaleX(0.9168);font-weight:bold;">.com</div>
</body></html>
